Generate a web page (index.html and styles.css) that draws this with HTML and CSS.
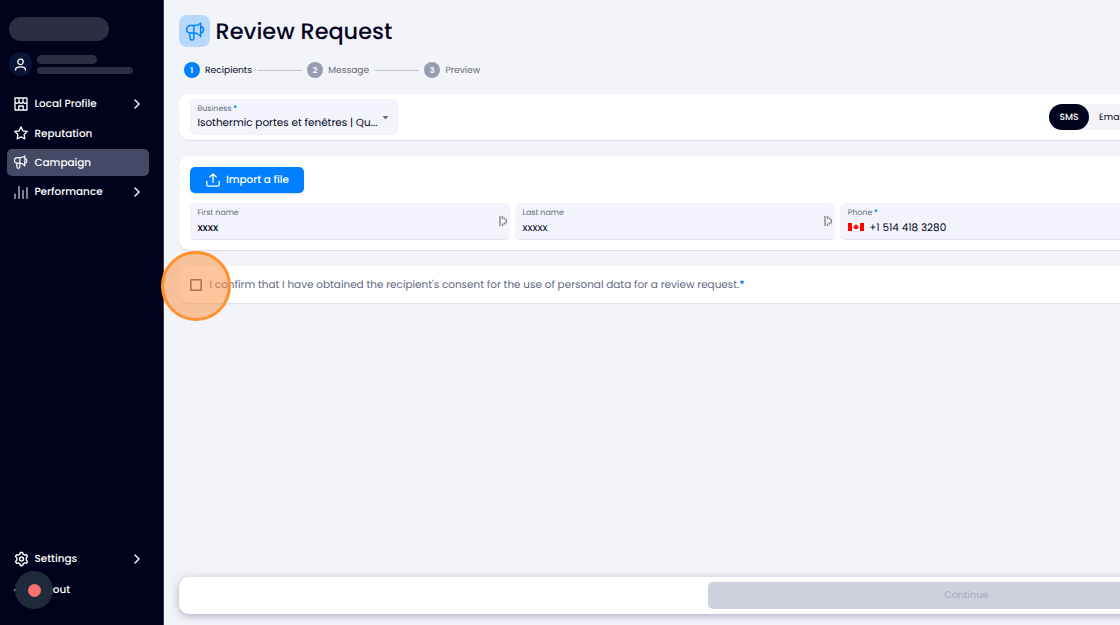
FILE: index.html
```html
<!DOCTYPE html>
<html lang="en">
<head>
    <meta charset="UTF-8">
    <meta name="viewport" content="width=device-width, initial-scale=1.0">
    <title>Review Request</title>
    <link rel="stylesheet" href="styles.css">
</head>
<body>

    <svg class="symbols" width="0" height="0">
        <symbol id="megaphone" viewBox="0 0 24 24">
            <path d="M10 4.500H5.500a4.500 4.500 0 0 0 0 9.500H10zM10 4.500c4 0 6.500-1.200 8.500-3v17c-2-2.500-4.500-4.500-8.500-4.500M18.500 5.500c4.800 1 4.800 7.500 0 8.500M4.500 14l.7 7c.2 2.300 4.800 2.300 4.800-.3V14"/>
        </symbol>
        <symbol id="chevron" viewBox="0 0 8 12">
            <path d="M2 2l4 4-4 4"/>
        </symbol>
        <symbol id="autofill" viewBox="0 0 8 12">
            <path d="M1 1v10M3.500 1v3M3.500 8.500V11M5.500 2.500v2M5.500 7.500v2M7.200 4v4.500"/>
        </symbol>
    </svg>

    <div class="app">
        <aside class="sidebar">
            <div class="logo-placeholder"></div>
            <div class="user">
                <div class="avatar">
                    <svg viewBox="0 0 14 14"><circle cx="7" cy="4.200" r="2.900"/><path d="M1.800 13v-.8c0-3.600 10.400-3.600 10.400 0v.8"/></svg>
                </div>
                <div class="user-lines">
                    <div class="line line-name"></div>
                    <div class="line line-mail"></div>
                </div>
            </div>

            <nav class="nav">
                <a class="nav-item">
                    <svg class="nav-icon" viewBox="0 0 14 14"><path d="M1 1h12v12H1zM1 4.500c0 2.400 4 2.400 4 0 0 2.400 4 2.400 4 0 0 2.400 4 2.400 4 0M5 2.500v2M9 2.500v2M4.800 13V9h4.400v4"/></svg>
                    <span>Local Profile</span>
                    <svg class="chevron"><use href="#chevron"/></svg>
                </a>
                <a class="nav-item">
                    <svg class="nav-icon" viewBox="0 0 14 14"><path d="M7 .9l1.900 4 4.300.6-3.100 3 .8 4.300L7 10.800l-3.900 2 .8-4.300-3.100-3 4.300-.6z"/></svg>
                    <span>Reputation</span>
                </a>
                <a class="nav-item active">
                    <svg class="nav-icon mega"><use href="#megaphone"/></svg>
                    <span>Campaign</span>
                </a>
                <a class="nav-item">
                    <svg class="nav-icon thin" viewBox="0 0 14 14"><path d="M1 9v4.500M5 1.500v12M9 5.500v8M13 2.500v11"/></svg>
                    <span>Performance</span>
                    <svg class="chevron"><use href="#chevron"/></svg>
                </a>
            </nav>

            <nav class="nav nav-bottom">
                <a class="nav-item">
                    <svg class="nav-icon gear" viewBox="0 0 16 16"><path d="M6.300 2.800L6.800 1h2.400l.5 1.800 1.700 1 1.800-.5 1.200 2.100L13 6.800v2.400l1.400 1.400-1.200 2.100-1.800-.5-1.700 1-.5 1.800H6.800l-.5-1.800-1.700-1-1.800.5-1.200-2.100L3 9.200V6.800L1.600 5.400l1.200-2.100 1.800.5z"/><circle cx="8" cy="8" r="2.100"/></svg>
                    <span>Settings</span>
                    <svg class="chevron"><use href="#chevron"/></svg>
                </a>
                <a class="nav-item logout">
                    <svg class="nav-icon" viewBox="0 0 14 14"><path d="M.8 7h8M4 4L.8 7 4 10M6 1h7v12H6"/></svg>
                    <span>Logout</span>
                    <div class="record"><i></i></div>
                </a>
            </nav>
        </aside>

        <main class="main">
            <header class="title">
                <div class="title-icon"><svg><use href="#megaphone"/></svg></div>
                <h1>Review Request</h1>
            </header>

            <div class="steps">
                <div class="step current"><b>1</b><span>Recipients</span></div>
                <div class="step-line"></div>
                <div class="step"><b>2</b><span>Message</span></div>
                <div class="step-line"></div>
                <div class="step"><b>3</b><span>Preview</span></div>
            </div>

            <section class="card business">
                <div class="field select">
                    <label>Business<em>*</em></label>
                    <div class="value">Isothermic portes et fenêtres | Qu...</div>
                    <svg class="caret" viewBox="0 0 6 4"><path d="M0 0h6L3 3.500z"/></svg>
                </div>
                <div class="toggle">
                    <span class="on">SMS</span>
                    <span>Email</span>
                </div>
            </section>

            <section class="card recipients">
                <button class="import">
                    <svg viewBox="0 0 14 14"><path d="M7 9.500V1M3.800 4L7 .9 10.200 4M.8 8.500v3c0 1 .6 1.700 1.700 1.700h9c1.100 0 1.700-.7 1.700-1.700v-3"/></svg>
                    <span>Import a file</span>
                </button>
                <div class="fields">
                    <div class="field">
                        <label>First name</label>
                        <div class="value x-first">xxxx</div>
                        <svg class="autofill"><use href="#autofill"/></svg>
                    </div>
                    <div class="field">
                        <label>Last name</label>
                        <div class="value x-last">xxxxx</div>
                        <svg class="autofill"><use href="#autofill"/></svg>
                    </div>
                    <div class="field">
                        <label>Phone<em>*</em></label>
                        <div class="value phone">
                            <svg class="flag" viewBox="0 0 16 8"><path fill="#fff" d="M0 0h16v8H0z"/><path fill="#f00" d="M0 0h4v8H0zM12 0h4v8h-4zM8 1l.8 1.300.9-.4-.2 1.600 1.300-.3-.4 1 .5.400L9 6H8.200v1h-.4V6H7L5.100 4.600l.5-.4-.4-1 1.300.3-.2-1.600.9.400z"/></svg>
                            <span>+1 514 418 3280</span>
                        </div>
                    </div>
                </div>
            </section>

            <section class="card consent">
                <div class="checkbox"><div class="highlight"></div></div>
                <p>I confirm that I have obtained the recipient's consent for the use of personal data for a review request.<em>*</em></p>
            </section>

            <footer class="footer">
                <button class="continue" disabled>Continue</button>
            </footer>
        </main>
    </div>

</body>
</html>
```
FILE: styles.css
```css
* {
    box-sizing: border-box;
}
body {
    margin: 0;
    overflow: hidden;
    font-family: Poppins, Inter, "Liberation Sans", sans-serif;
    font-size: 10.450px;
    text-rendering: geometricPrecision;
    color: #05051f;
    background: #f3f4fa;
}
svg {
    display: block;
    flex: none;
    fill: none;
    stroke: currentColor;
    stroke-width: 1.3;
    stroke-linecap: round;
    stroke-linejoin: round;
}
.symbols {
    position: absolute;
}
h1, p {
    margin: 0;
}
span, h1, p, label, .value {
    white-space: nowrap;
}
button {
    border: none;
    font-family: inherit;
    text-rendering: inherit;
}
em {
    font-style: normal;
    font-weight: 600;
    color: #0080ff;
}
.app {
    display: flex;
    width: 1120px;
    height: 625px;
    overflow: hidden;
}

/* sidebar */
.sidebar {
    display: flex;
    flex-direction: column;
    flex: none;
    width: 164px;
    padding: 17px 14px 22px 7px;
    color: #fff;
    background: #00021d;
    border-right: 1px solid #3a3b4f;
}
.logo-placeholder {
    width: 100px;
    height: 24px;
    margin-left: 2px;
    border-radius: 12px;
    background: #2c2e43;
}
.user {
    display: flex;
    align-items: center;
    gap: 5px;
    height: 24px;
    margin: 11px 0 14.500px 2px;
}
.avatar {
    display: flex;
    align-items: center;
    justify-content: center;
    width: 23px;
    height: 24px;
    border-radius: 50%;
    background: #0b1538;
}
.avatar svg {
    width: 13px;
    height: 13px;
    stroke-width: 1.4;
}
.line {
    border-radius: 5px;
    background: #2c2e43;
}
.line-name {
    width: 60px;
    height: 9px;
    margin-bottom: 3px;
}
.line-mail {
    width: 96px;
    height: 7px;
}
.nav {
    display: flex;
    flex-direction: column;
    gap: 2.500px;
}
.nav-bottom {
    gap: 4px;
    margin-top: auto;
}
.nav-item {
    position: relative;
    display: flex;
    align-items: center;
    gap: 6px;
    height: 26.800px;
    padding: 0 8px 0 7.400px;
    border-radius: 5px;
    font-weight: 500;
}
.nav-item span {
    padding-top: 1px;
}
.nav-item.active {
    background: #444a66;
}
.nav-icon {
    width: 14px;
    height: 14px;
}
.nav-icon.mega {
    stroke-width: 2;
}
.nav-icon.thin {
    stroke-width: 1;
}
.gear {
    width: 15px;
    height: 16px;
    margin: 0 -.5px;
    stroke-width: 1.5;
}
.chevron {
    width: 8px;
    height: 12px;
    margin-left: auto;
    stroke-width: 1.4;
}
.record {
    position: absolute;
    left: 8px;
    top: -5px;
    display: flex;
    align-items: center;
    justify-content: center;
    width: 38px;
    height: 38px;
    border-radius: 50%;
    background: #1f2a3b;
}
.record i {
    width: 13px;
    height: 13px;
    border-radius: 50%;
    background: #f87171;
}

/* content */
.main {
    display: flex;
    flex-direction: column;
    flex: none;
    width: 1066px;
    padding: 15px 0 11px 15.300px;
}
.title {
    display: flex;
    align-items: center;
    gap: 5.300px;
    height: 32px;
}
.title-icon {
    display: flex;
    align-items: center;
    justify-content: center;
    width: 31px;
    height: 32px;
    border-radius: 8px;
    color: #0080ff;
    background: #b9d9fc;
}
.title-icon svg {
    width: 19px;
    height: 19px;
    margin-left: 1px;
    stroke-width: 1.800;
}
h1 {
    font-size: 22.400px;
    font-weight: 500;
    line-height: 31px;
}
.steps {
    display: flex;
    align-items: center;
    height: 16px;
    margin: 15.300px 0 15.700px 4.500px;
    font-size: 9.100px;
}
.step {
    display: flex;
    align-items: center;
    gap: 5.300px;
    color: #62646f;
}
.step span {
    padding-top: 1px;
}
.step b {
    width: 16px;
    height: 16px;
    border-radius: 50%;
    font-size: 8px;
    font-weight: 600;
    line-height: 17px;
    text-align: center;
    color: #fff;
    background: #969db3;
}
.step.current {
    color: #05051f;
}
.step.current b {
    background: #0080ff;
}
.step-line {
    width: 45px;
    height: 1px;
    margin: 0 5px;
    background: #c3c5cd;
}
.card {
    flex: none;
    width: 991px;
    padding: 0 10.300px;
    border-radius: 10px;
    background: #fff;
    box-shadow: 0 1px 1px rgba(60, 60, 100, 0.12);
}
.business {
    display: flex;
    align-items: center;
    height: 46.500px;
    margin-bottom: 15.500px;
}
.field {
    position: relative;
    width: 320.500px;
    height: 36.500px;
    padding: 4px 7.800px;
    border-radius: 5px;
    background: #f3f4fb;
    border-bottom: 1px solid #dfe1ef;
}
.field label {
    display: block;
    font-size: 7.900px;
    line-height: 12.500px;
    color: #626985;
}
.field label em {
    margin-left: 1.500px;
}
.value {
    line-height: 15px;
}
.select {
    width: 208.500px;
    border-bottom: none;
}
.select label {
    padding-top: .5px;
}
.select .value {
    margin-top: -.5px;
}
.caret {
    position: absolute;
    right: 9px;
    top: 17px;
    width: 7px;
    height: 4px;
    fill: #6b6f83;
    stroke: none;
}
.toggle {
    display: flex;
    width: 90px;
    height: 26px;
    margin-left: 651px;
    border-radius: 13px;
    background: #f3f4fa;
}
.toggle span {
    width: 50px;
    padding-left: 10px;
    font-size: 9.100px;
    line-height: 27.500px;
}
.toggle .on {
    flex: none;
    width: 40px;
    padding: 0;
    border-radius: 13px;
    text-align: center;
    font-weight: 500;
    color: #fff;
    background: #00021d;
}
.recipients {
    height: 94px;
    padding-top: 11px;
    margin-bottom: 16px;
}
.import {
    display: flex;
    align-items: center;
    gap: 6px;
    width: 114px;
    height: 26px;
    padding: 0 0 0 16.300px;
    border-radius: 5px;
    font-size: 10.450px;
    font-weight: 500;
    color: #fff;
    background: #0080ff;
    box-shadow: 0 1px 2px rgba(0, 60, 140, 0.2);
}
.import svg {
    width: 14px;
    height: 14px;
}
.fields {
    display: flex;
    gap: 5px;
    margin-top: 10.500px;
}
.x-first {
    font-weight: 500;
}
.autofill {
    position: absolute;
    right: 3px;
    top: 12px;
    width: 8px;
    height: 12px;
    color: #85878d;
    stroke-width: 1.400;
    stroke-linecap: butt;
}
.phone {
    display: flex;
    align-items: center;
    gap: 5.500px;
}
.flag {
    width: 16px;
    height: 8px;
    stroke: none;
}
.consent {
    display: flex;
    align-items: center;
    gap: 7.500px;
    height: 37.500px;
}
.consent p {
    color: #626985;
}
.checkbox {
    position: relative;
    width: 12px;
    height: 12px;
    margin-left: .4px;
    border: 1px solid #55586c;
    border-radius: 1px;
    box-shadow: inset 0 0 0 .5px #55586c;
}
.highlight {
    position: absolute;
    left: -30px;
    top: -29.200px;
    z-index: 2;
    width: 70.500px;
    height: 70.500px;
    border: 3px solid #ff922e;
    border-radius: 50%;
    background: rgba(250, 140, 55, 0.5);
}
.footer {
    display: flex;
    flex: none;
    height: 37.500px;
    margin-top: auto;
    padding: 5px 5px 5px 528.500px;
    border-radius: 10px;
    background: #fff;
    box-shadow: 0 2px 8px rgba(40, 40, 80, 0.35);
}
.continue {
    width: 517px;
    padding-top: 3px;
    border-radius: 5px;
    font-size: 9.700px;
    color: #a5a9b9;
    background: #ced1dc;
}
```
